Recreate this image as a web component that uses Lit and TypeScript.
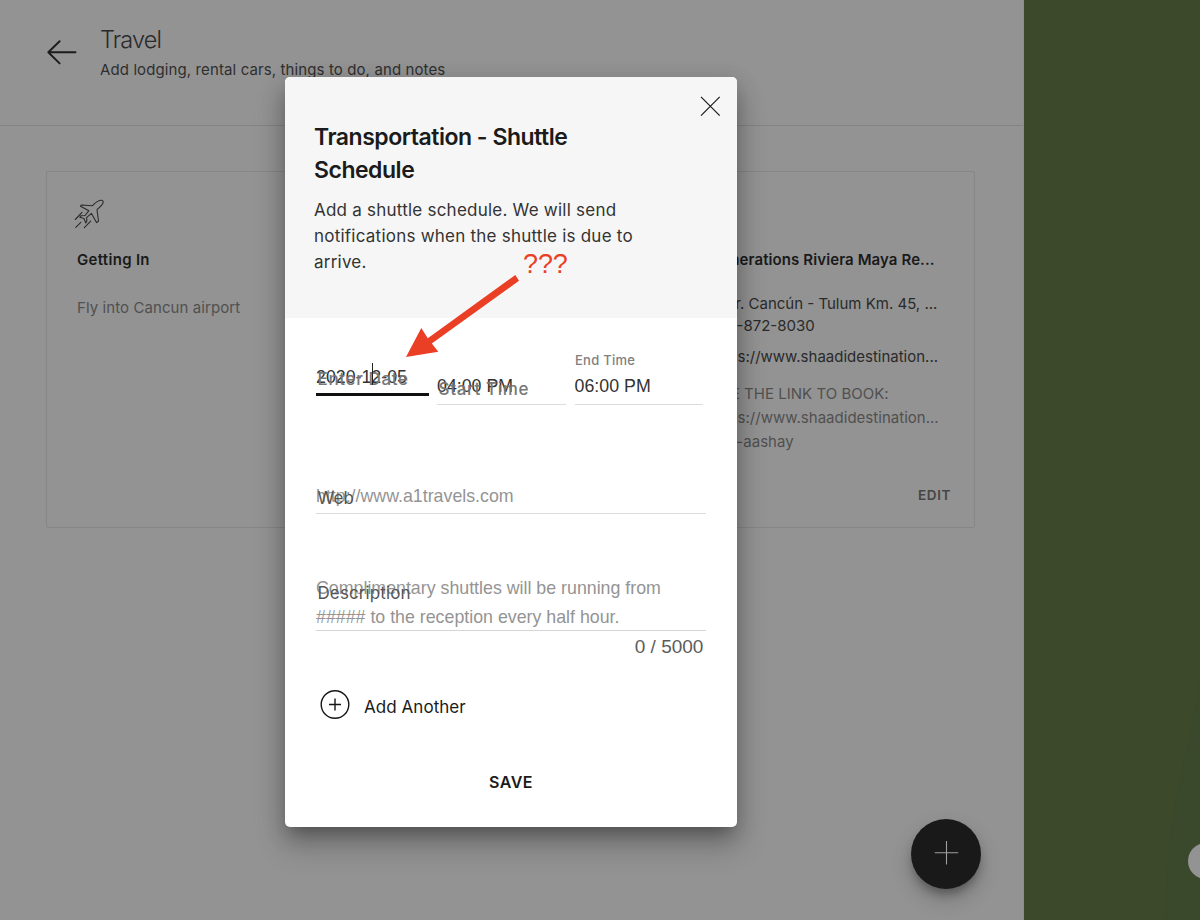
import { LitElement, html, css } from "lit";
import { customElement } from "lit/decorators.js";

@customElement("travel-card")
export class TravelCard extends LitElement {
  static styles = css`
    :host { display: block; box-sizing: border-box; height: 357px; border: 1px solid #868686; border-radius: 2px; }
    .body { box-sizing: border-box; height: 100%; padding: 25px 23px 20px 30px; display: flex; flex-direction: column; }
    .icon { height: 34px; margin-left: -3px; }
  `;
  render() {
    return html`<div class="body"><div class="icon"><slot name="icon"></slot></div><slot></slot></div>`;
  }
}

@customElement("shuttle-dialog")
export class ShuttleDialog extends LitElement {
  static styles = css`
    :host {
      display: block; box-sizing: border-box; width: 452px; height: 750px; border-radius: 5px; overflow: hidden;
      background: #fff; color: #1b1b1b; font-family: Inter, "Liberation Sans", sans-serif;
      box-shadow: 0 11px 15px -7px rgba(0,0,0,.25), 0 18px 30px 2px rgba(0,0,0,.2), 0 6px 24px 1px rgba(0,0,0,.14);
    }
    .head { box-sizing: border-box; height: 241px; background: #f6f6f6; padding: 19px 15px 0 29px; }
    .close { display: flex; justify-content: flex-end; height: 25px; }
    h2 { margin: 0; font-size: 23px; font-weight: 600; line-height: 33.3px; letter-spacing: -.48px; }
    .intro { margin: 9px 0 0; font-size: 17px; line-height: 26px; letter-spacing: .23px; color: #333; }
    .form { padding: 0 31px; }
    .row { display: flex; gap: 8px; height: 87px; }
    .field { position: relative; box-sizing: border-box; font: 17.8px/26px "Liberation Sans", Arial, sans-serif; color: #333; white-space: nowrap; }
    .date { width: 113px; height: 78px; padding-top: 46px; border-bottom: 3px solid #111; }
    .time { width: 129px; height: 87px; padding-top: 55px; border-bottom: 1px solid #dcdcdc; }
    .end { margin-left: .6px; width: 128px; }
    .time .value { display: block; }
    .float { position: absolute; left: 1.5px; font: 500 17px/24px Inter, sans-serif; letter-spacing: .65px; color: #777; }
    .date .float { top: 49px; }
    .time .float { top: 59px; }
    .time .small { left: .4px; top: 30px; font-size: 13px; letter-spacing: .27px; color: #808080; }
    .caret { position: absolute; left: 56px; top: 45px; width: 1px; height: 22px; background: #222; }
    .web { margin-top: 78px; height: 31px; border-bottom: 1px solid #dcdcdc; color: #949494; }
    .web .float { top: 3px; }
    .desc { margin-top: 60px; height: 57px; line-height: 28.5px; border-bottom: 1px solid #d5d5d5; color: #949494; }
    .web .float, .desc .float { font-weight: 400; letter-spacing: .1px; color: #555; }
    .desc .float { top: 7px; }
    .count { margin-top: 4px; text-align: right; padding-right: 2.6px; font: 19px/24px "Liberation Sans", Arial, sans-serif; color: #5c5c5c; }
    .add { display: flex; align-items: center; gap: 13px; margin: 31px 0 0 4px; height: 30px; font-size: 17px; line-height: 24px; letter-spacing: .05px; }
    .add span { padding-top: 4px; }
    .save { margin-top: 50px; text-align: center; font-size: 16px; font-weight: 600; line-height: 24px; letter-spacing: .55px; }
    svg { display: block; }
  `;
  render() {
    return html`
      <div class="head">
        <div class="close">
          <svg width="24" height="22" viewBox="0 0 24 22" fill="none" stroke="#1c1c1c" stroke-width="1.2"><path d="M3 .8 21.7 19.6M21.7 .8 3 19.6" /></svg>
        </div>
        <h2>Transportation - Shuttle<br />Schedule</h2>
        <p class="intro">Add a shuttle schedule. We will send<br />notifications when the shuttle is due to<br />arrive.</p>
      </div>
      <div class="form">
        <div class="row">
          <div class="field date"><span class="value">2020-12-05</span><span class="float">Enter Date</span><i class="caret"></i></div>
          <div class="field time"><span class="value">04:00 PM</span><span class="float">Start Time</span></div>
          <div class="field time end"><span class="value">06:00 PM</span><span class="float small">End Time</span></div>
        </div>
        <div class="field web">http://www.a1travels.com<span class="float">Web</span></div>
        <div class="field desc">Complimentary shuttles will be running from<br />##### to the reception every half hour.<span class="float">Description</span></div>
        <div class="count">0 / 5000</div>
        <div class="add">
          <svg width="31" height="30" viewBox="0 0 31 30" fill="none" stroke="#151515" stroke-width="1.4"><circle cx="15" cy="14.5" r="13.8" /><path d="M9 14.5h12M15 8.5v12" /></svg>
          <span>Add Another</span>
        </div>
        <div class="save">SAVE</div>
      </div>`;
  }
}

@customElement("app-root")
export class AppRoot extends LitElement {
  static styles = css`
    :host {
      display: block; position: relative; width: 1200px; height: 920px; overflow: hidden;
      background: #949494; font-family: Inter, "Liberation Sans", sans-serif; color: #2a2a2a;
    }
    .page { display: grid; grid-template-columns: 1024px 1fr; height: 100%; }
    .main { background: #939393; box-sizing: border-box; border-right: 1px solid #89908b; }
    .preview { background: #3c492a; overflow: hidden; }
    .top { display: flex; box-sizing: border-box; height: 126px; padding: 24px 0 0 47px; gap: 23px; border-bottom: 1px solid #838383; }
    .back { padding-top: 15px; }
    h1 { margin: 0; font-size: 23.5px; font-weight: 300; line-height: 32px; letter-spacing: -.85px; }
    .sub { font-size: 15px; line-height: 20px; letter-spacing: .11px; margin-top: 4px; color: #2f2f2f; }
    .cards { display: grid; grid-template-columns: 296px 296px; column-gap: 337px; padding: 45px 0 0 46px; }
    .name { font-size: 15px; font-weight: 600; line-height: 20px; letter-spacing: .1px; margin-top: 19px; color: #1a1a1a; white-space: nowrap; }
    .note, .line { font-size: 15px; line-height: 24px; white-space: nowrap; }
    .note { color: #505050; letter-spacing: .02px; }
    .line { color: #2a2a2a; line-height: 22px; }
    .first { margin-top: 26px; letter-spacing: .08px; }
    .wide { letter-spacing: .3px; }
    .addr { margin-top: 23px; }
    .url { margin-top: 8.5px; }
    .more { margin-top: 14.5px; }
    .edit { margin-top: auto; text-align: right; font-size: 13.5px; font-weight: 600; letter-spacing: .6px; line-height: 24px; color: #464646; }
    .fab {
      position: absolute; left: 911px; top: 819px; width: 70px; height: 70px; border-radius: 50%; background: #191919;
      box-shadow: 0 7px 10px -2px rgba(0,0,0,.3), 0 10px 20px 2px rgba(0,0,0,.16);
    }
    .knob { position: absolute; left: 1188px; top: 843px; width: 36px; height: 36px; border-radius: 50%; background: #949394; }
    .modal { position: absolute; left: 285px; top: 77px; }
    .mark { position: absolute; left: 400px; top: 245px; }
    .ask { position: absolute; left: 523px; top: 248px; font: 27px/32px "Liberation Sans", Arial, sans-serif; color: #ea3f25; letter-spacing: -.1px; }
    svg { display: block; }
  `;
  render() {
    return html`
      <div class="page">
        <div class="main">
          <div class="top">
            <div class="back">
              <svg width="30" height="26" viewBox="0 0 30 26" fill="none" stroke="#1c1c1c" stroke-width="1.9" stroke-linecap="round" stroke-linejoin="round"><path d="M28.5 13.3H1.3M12.6 2.2 1.3 13.3 12.6 24.4" /></svg>
            </div>
            <div>
              <h1>Travel</h1>
              <div class="sub">Add lodging, rental cars, things to do, and notes</div>
            </div>
          </div>
          <div class="cards">
            <travel-card>
              <svg slot="icon" width="32" height="34" viewBox="0 0 32 34" fill="none" stroke="#2b2b2b" stroke-width="1.1" stroke-linecap="round" stroke-linejoin="round">
                <path d="M27.6 3.2c1.5.3 2 1.6 1.2 3.2-.8 1.7-2.3 3.1-5.8 6.3l1.5 11.5-2 1.4-5-9.2-4.8 4 .1 4.1-1.1 1.4-1.7-4.4-4.2-1.2 1.1-1.5 4.2-.3 3.8-4.8L6.5 9.2 7.4 8l10.9.8c3.2-3.4 6.2-5.7 9.3-5.6z" />
                <path d="M8 15.4 1.3 22.5M6.8 25.3l-5 5M16.7 24.2l-6.4 6.4" />
              </svg>
              <div class="name wide">Getting In</div>
              <div class="note first">Fly into Cancun airport</div>
            </travel-card>
            <travel-card>
              <div class="name">Generations Riviera Maya Re...</div>
              <div class="line addr">Carr. Cancún - Tulum Km. 45, ...</div>
              <div class="line">877-872-8030</div>
              <div class="line url">https://www.shaadidestination...</div>
              <div class="note more">USE THE LINK TO BOOK:</div>
              <div class="note">https://www.shaadidestination...</div>
              <div class="note">riya-aashay</div>
              <div class="edit">EDIT</div>
            </travel-card>
          </div>
        </div>
        <div class="preview">
          <svg width="176" height="920" viewBox="0 0 176 920"><path d="M176 680C165 750 150 790 145 850L140 920H176Z" fill="#3a482b" /></svg>
        </div>
      </div>
      <div class="fab">
        <svg width="70" height="70" viewBox="0 0 70 70" fill="none" stroke="#a0a0a0" stroke-width="1.1"><path d="M23.8 33.8h23.4M35.5 22v23.4" /></svg>
      </div>
      <div class="knob"></div>
      <shuttle-dialog class="modal"></shuttle-dialog>
      <svg class="mark" width="130" height="120" viewBox="400 245 130 120"><path d="M515.3 275 427.8 338.3 421.3 328 406 357 438.3 351.7 431.8 343.6 519 280.7Z" fill="#ea3f25" /></svg>
      <div class="ask">???</div>
    `;
  }
}
